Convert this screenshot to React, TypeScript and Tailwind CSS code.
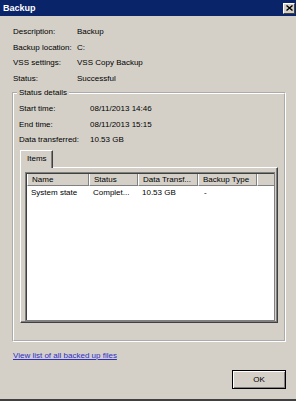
import React from "react";

const summaryRows = [
  ["Description:", "Backup"],
  ["Backup location:", "C:"],
  ["VSS settings:", "VSS Copy Backup"],
  ["Status:", "Successful"],
];

const detailRows = [
  ["Start time:", "08/11/2013 14:46"],
  ["End time:", "08/11/2013 15:15"],
  ["Data transferred:", "10.53 GB"],
];

const columns = [
  { label: "Name", width: "w-[62px]" },
  { label: "Status", width: "w-[49px]" },
  { label: "Data Transf...", width: "w-[60px]" },
  { label: "Backup Type", width: "w-[59px]" },
];

const items = [["System state", "Complet...", "10.53 GB", "-"]];

const App = () => {
  return (
    <div className="w-[296px] h-[401px] flex flex-col bg-[#d4d0c8] border-b-2 border-[#404040] font-['Liberation_Sans',Arial,sans-serif] text-[8px] text-black">
      {/* Title bar */}
      <div className="h-[16px] shrink-0 bg-[#0a246a] flex items-center justify-between pl-[3px] pr-[1px]">
        <span className="text-white font-bold text-[9px] leading-[16px]">Backup</span>
        <div className="w-[12px] h-[11px] flex items-center justify-center bg-[#d4d0c8] border-t border-l border-white border-r border-b border-r-[#404040] border-b-[#404040]">
          <svg
            width="7"
            height="6"
            viewBox="0 0 7 6"
          >
            <path
              d="M0.5 0.5 L6.5 5.5 M6.5 0.5 L0.5 5.5"
              stroke="#000"
              strokeWidth="1.4"
            />
          </svg>
        </div>
      </div>

      <div className="flex flex-col pt-[8px] pl-[12px] pr-[10px]">
        {/* Summary */}
        <div className="flex flex-col pl-[1px]">
          {summaryRows.map(([label, value]) => (
            <div
              key={label}
              className="flex leading-[15.5px]"
            >
              <span className="w-[64px]">{label}</span>
              <span>{value}</span>
            </div>
          ))}
        </div>

        {/* Status details group */}
        <fieldset className="mt-[1px] flex flex-col border-2 border-white [border-style:groove] pl-[5px] pr-[6px] pt-[2px] pb-[17px]">
          <legend className="-ml-[2px] px-[2px] leading-[12px]">Status details</legend>
          {detailRows.map(([label, value]) => (
            <div
              key={label}
              className="flex leading-[15.5px]"
            >
              <span className="w-[71px]">{label}</span>
              <span>{value}</span>
            </div>
          ))}

          {/* Tabs */}
          <div className="mt-[2.5px] ml-[1px] flex flex-col">
            <div className="flex">
              <div className="relative z-10 -mb-[1px] w-[33px] h-[18px] bg-[#d4d0c8] border-t border-l border-white border-r border-r-[#404040] shadow-[inset_-1px_0_0_#808080] pl-[6px] leading-[16px]">
                Items
              </div>
            </div>
            <div className="h-[156px] flex flex-col border-t border-l border-white border-r border-b border-r-[#404040] border-b-[#404040] shadow-[inset_-1px_-1px_0_#808080] pt-[4px] pl-[4px] pr-[2px] pb-[1px]">
              {/* List view */}
              <div className="flex-1 flex flex-col bg-white border border-[#808080] shadow-[inset_1px_1px_0_#404040]">
                <div className="flex h-[12px] ml-[1px] mt-[1px] bg-[#d4d0c8]">
                  {columns.map((col) => (
                    <div
                      key={col.label}
                      className={`${col.width} shrink-0 pl-[4px] leading-[12px] border-l border-white border-r border-r-[#808080] border-b border-b-[#808080] whitespace-nowrap overflow-hidden`}
                    >
                      {col.label}
                    </div>
                  ))}
                  <div className="flex-1 border-l border-white border-b border-b-[#808080]" />
                </div>
                {items.map((row) => (
                  <div
                    key={row[0]}
                    className="flex ml-[1px] leading-[13px]"
                  >
                    {row.map((cell, i) => (
                      <div
                        key={i}
                        className={`${columns[i].width} shrink-0 pl-[4px] whitespace-nowrap overflow-hidden ${i === 3 ? "pl-[6px]" : ""}`}
                      >
                        {cell}
                      </div>
                    ))}
                  </div>
                ))}
              </div>
            </div>
          </div>
        </fieldset>

        {/* Link */}
        <a
          href="#"
          className="mt-[8px] pl-[1px] leading-[12px] text-[#2d2dc8] underline self-start"
        >
          View list of all backed up files
        </a>

        {/* OK */}
        <button className="mt-[8px] self-end w-[54px] h-[19px] bg-[#d4d0c8] border border-black shadow-[inset_1px_1px_0_#ffffff,inset_-1px_-1px_0_#808080] text-[8px] leading-[17px]">
          OK
        </button>
      </div>
    </div>
  );
};

export default App;
